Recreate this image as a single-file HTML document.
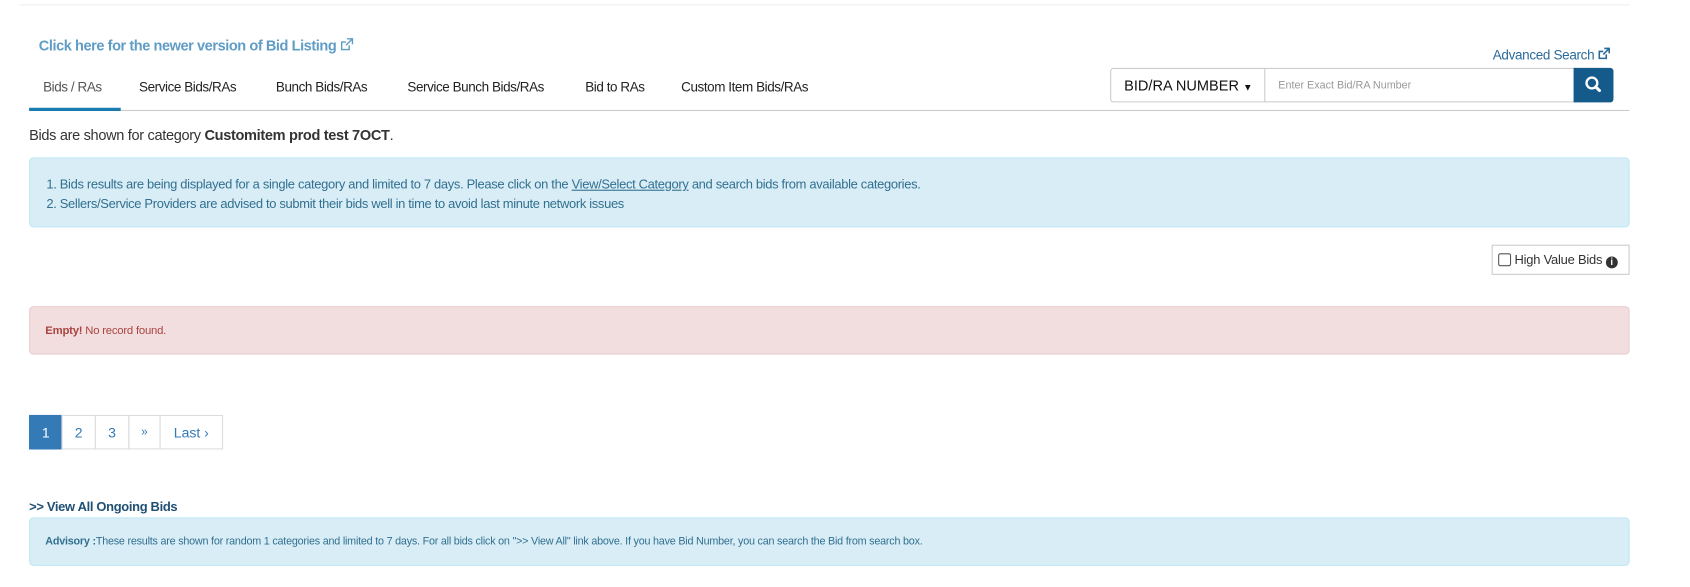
<!DOCTYPE html>
<html><head><meta charset="utf-8"><style>
*{box-sizing:border-box;margin:0;padding:0}
body{width:1690px;height:587px;background:#fff;font-family:"Liberation Sans",Arial,sans-serif;color:#333;position:relative;overflow:hidden}
#w{position:absolute;left:0;top:0;width:1568px;height:545px;transform:scale(1.0778);transform-origin:0 0}
.a{position:absolute}
.topline{left:18px;top:4px;width:1494px;height:1px;background:#eee}
.newlink{left:36px;top:35px;font-size:13.5px;font-weight:bold;color:#5f9cc6;letter-spacing:-0.4px}
.tabs{left:27px;top:74px;font-size:12.5px;color:#222;letter-spacing:-0.4px}
.tabs span{position:absolute;top:0;white-space:nowrap}
.tabline{left:27px;top:102px;width:1485px;height:1px;background:#ccc}
.tabact{left:27px;top:100px;width:85px;height:3px;background:#1a7bb0}
.adv{left:1385px;top:44px;font-size:12.5px;color:#2a6a99;letter-spacing:-0.3px}
.sel{left:1030px;top:63px;width:144px;height:32px;border:1px solid #ccc;border-radius:3px 0 0 3px;font-size:13.5px;color:#111;padding:8px 0 0 12px}
.inp{left:1173px;top:63px;width:288px;height:32px;border:1px solid #ccc;border-left:none;font-size:10px;color:#999;padding:10px 0 0 13px}
.btn{left:1460px;top:63px;width:37px;height:32px;background:#145a8a;border-radius:0 3px 3px 0}
.cat{left:27px;top:118px;font-size:13.5px;color:#333;letter-spacing:-0.3px}
.info{left:27px;top:146px;width:1485px;height:65px;background:#d9edf7;border:1px solid #bce8f1;border-radius:4px;font-size:12px;color:#31708f;padding:15px 0 0 15px;line-height:18px;letter-spacing:-0.3px}
.hv{left:1384px;top:227px;width:128px;height:28px;border:1px solid #ccc;font-size:12px;color:#333;padding:6px 0 0 5px;white-space:nowrap;letter-spacing:-0.2px}
.err{left:27px;top:284px;width:1485px;height:45px;background:#f2dede;border:1px solid #ebccd1;border-radius:4px;font-size:10.5px;color:#a94442;padding:16px 0 0 14px;letter-spacing:-0.2px}
.pg{left:27px;top:385px;height:32px;display:flex}
.pg div{height:32px;border:1px solid #ddd;margin-left:-1px;font-size:13px;color:#337ab7;display:flex;align-items:center;justify-content:center}
.va{left:27px;top:463px;font-size:12px;font-weight:bold;color:#1f4f73;letter-spacing:-0.3px}
.advis{left:27px;top:480px;width:1485px;height:45px;background:#d9edf7;border:1px solid #bce8f1;border-radius:4px;font-size:10px;color:#31708f;padding:16px 0 0 14px;letter-spacing:-0.2px}
</style></head><body><div id="w">
<div class="a topline"></div>
<div class="a newlink">Click here for the newer version of Bid Listing <svg width="13" height="13" viewBox="0 0 13 13" style="vertical-align:-1px"><path d="M9 7v4H2V4h4" fill="none" stroke="#5f9cc6" stroke-width="1.3"/><path d="M7 1h5v5M12 1L6 7" fill="none" stroke="#5f9cc6" stroke-width="1.3"/></svg></div>
<div class="a adv">Advanced Search <svg width="12" height="12" viewBox="0 0 13 13" style="vertical-align:-1px"><path d="M9 7v4H2V4h4" fill="none" stroke="#2a6a99" stroke-width="1.6"/><path d="M7 1h5v5M12 1L6 7" fill="none" stroke="#2a6a99" stroke-width="1.6"/></svg></div>
<div class="a tabs">
<span style="left:13px;color:#555">Bids / RAs</span>
<span style="left:102px">Service Bids/RAs</span>
<span style="left:229px">Bunch Bids/RAs</span>
<span style="left:351px">Service Bunch Bids/RAs</span>
<span style="left:516px">Bid to RAs</span>
<span style="left:605px">Custom Item Bids/RAs</span>
</div>
<div class="a tabline"></div>
<div class="a tabact"></div>
<div class="a sel">BID/RA NUMBER <span style="font-size:9px">▼</span></div>
<div class="a inp">Enter Exact Bid/RA Number</div>
<div class="a btn"><svg width="37" height="32" viewBox="0 0 37 32"><circle cx="17" cy="14" r="5" fill="none" stroke="#fff" stroke-width="2.2"/><path d="M20.5 17.5L24 21" stroke="#fff" stroke-width="2.8" stroke-linecap="round"/></svg></div>
<div class="a cat">Bids are shown for category <b>Customitem prod test 7OCT</b>.</div>
<div class="a info">1. Bids results are being displayed for a single category and limited to 7 days. Please click on the <u>View/Select Category</u> and search bids from available categories.<br>2. Sellers/Service Providers are advised to submit their bids well in time to avoid last minute network issues</div>
<div class="a hv"><span style="display:inline-block;width:12px;height:12px;border:1px solid #555;border-radius:2px;vertical-align:-2px"></span> High Value Bids <span style="display:inline-block;width:11px;height:11px;border-radius:50%;background:#333;color:#fff;font-size:9px;font-weight:bold;text-align:center;line-height:11px;vertical-align:-1px">i</span></div>
<div class="a err"><b>Empty!</b> No record found.</div>
<div class="a pg">
<div style="width:31px;margin-left:0;background:#337ab7;border-color:#337ab7;color:#fff">1</div>
<div style="width:32px">2</div>
<div style="width:32px">3</div>
<div style="width:30px;font-size:11px">»</div>
<div style="width:59px">Last ›</div>
</div>
<div class="a va">&gt;&gt; View All Ongoing Bids</div>
<div class="a advis"><b>Advisory :</b>These results are shown for random 1 categories and limited to 7 days. For all bids click on "&gt;&gt; View All" link above. If you have Bid Number, you can search the Bid from search box.</div>
</div></body></html>
